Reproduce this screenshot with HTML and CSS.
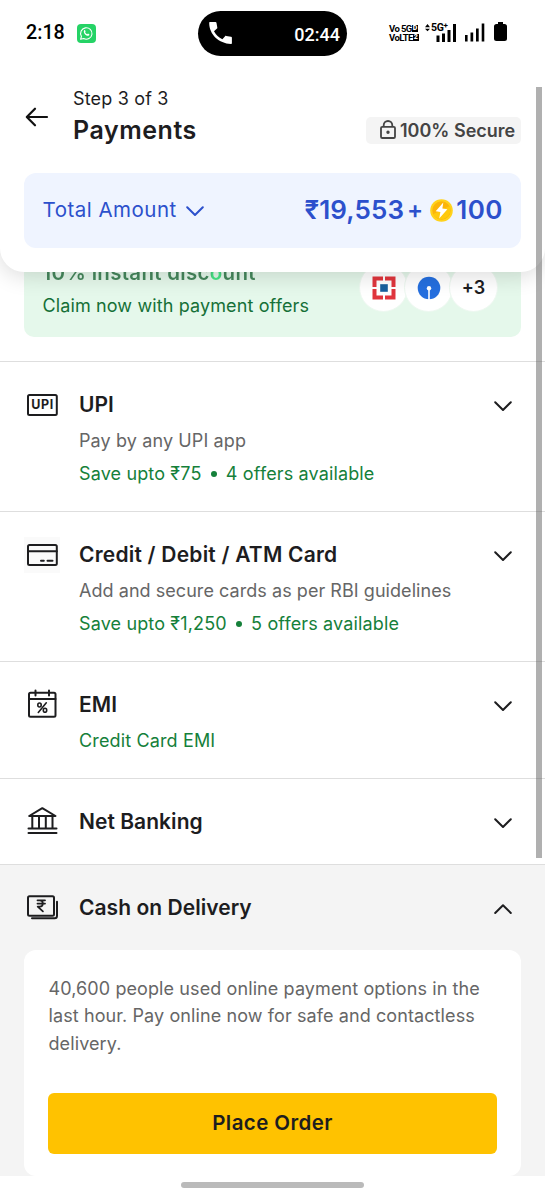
FILE: index.html
```html
<!DOCTYPE html>
<html lang="en">
<head>
<meta charset="utf-8">
<title>Payments</title>
<link rel="stylesheet" href="styles.css">
</head>
<body>
<div class="screen">
  <header class="top">
    <div class="status">
      <span class="clock">2:18</span>
      <svg class="wa" width="19" height="19" viewBox="0 0 19 19"><rect width="19" height="19" rx="4" fill="#25d366"/><path d="M3.600 15.300l.8-3A5.700 5.700 0 1 1 6.700 14.500z" fill="none" stroke="#fff" stroke-width="1.100" stroke-linejoin="round"/><path d="M7.200 6.300c.5-.4.9-.2 1 .2l.4 1-.5.8c.5 1 1.200 1.600 2.100 2l.8-.7 1.200.6c.4.3.1 1.100-.4 1.400-1 .6-2.600 0-3.700-1.100S6.300 7.300 7.200 6.300z" fill="#fff"/></svg>
      <div class="call">
        <svg width="24" height="24" viewBox="0 0 24 24"><path d="M1.200 1h5.300c.6 0 .9.3 1 .9l.8 4.500c.1.500 0 .8-.3 1.100L5 10.200a18 18 0 0 0 8.400 8l2.700-3c.3-.3.6-.4 1.100-.3l4.800.9c.6.100.9.500.9 1v5.100c0 .7-.4 1-1 1C10 22.600.3 13.500.2 2c0-.6.3-1 1-1z" fill="#fff"/></svg>
        <span>02:44</span>
      </div>
      <div class="vo"><div>Vo 5G<b>D</b></div><div>VoLTE<b>2</b></div></div>
      <div class="cell">
        <svg width="32" height="20" viewBox="0 0 32 20"><path d="M0 4.300L2.500 1 5 4.300zM0 5.700h5L2.500 8.300z"/><path d="M11.500 12.500h3V19h-3zM17 10.500h3V19h-3zM22.500 7h3v12h-3zM28 1h3v18h-3z"/></svg>
        <span class="fiveg">5G<sup>+</sup></span>
      </div>
      <svg class="bars" width="20" height="19" viewBox="0 0 20 19"><path d="M0 12h2.600v6.500H0zM5.500 9.500h2.700v9H5.500zM11 5.500h2.700v13H11zM16.700.5h2.600v18h-2.600z"/></svg>
      <svg class="batt" width="13" height="20" viewBox="0 0 13 20"><path d="M4 0h5v2h1.500A2.500 2.500 0 0 1 13 4.500v12a2.500 2.500 0 0 1-2.500 2.500h-8A2.500 2.500 0 0 1 0 16.500v-12A2.500 2.500 0 0 1 2.500 2H4z"/></svg>
    </div>
    <div class="nav">
      <svg class="back" width="24" height="20" viewBox="0 0 24 20"><path d="M22 10H2M10 1.700L1.800 10 10 18.300"/></svg>
      <div class="heading">
        <div class="step">Step 3 of 3</div>
        <h1>Payments</h1>
      </div>
      <div class="secure">
        <svg width="16" height="19" viewBox="0 0 16 19"><rect x="1" y="6.800" width="14" height="11.200" rx="1.300"/><path d="M3.700 6.500V5.300a4.300 4.300 0 0 1 8.600 0v1.200"/><circle cx="8" cy="12.300" r=".8"/></svg>
        <span>100% Secure</span>
      </div>
    </div>
    <div class="total">
      <span class="label">Total Amount</span>
      <svg class="chev" width="18" height="11" viewBox="0 0 18 11"><path d="M1.200 1.200L9 9l7.800-7.800"/></svg>
      <span class="sum">₹19,553</span><span class="plus">+</span>
      <svg class="coin" width="23" height="23" viewBox="0 0 23 23"><circle cx="11.500" cy="11.500" r="11.300" fill="#ffd21c"/><circle cx="11.500" cy="11.500" r="9.200" fill="#fbb40a"/><path d="M3 15.200A9.200 9.200 0 0 0 19.500 7z" fill="#ffc90d"/><path d="M13.300 3.500L5.700 12.300l4.700.7-1.200 6.500 8.200-9.300-5-.7z" fill="#fff"/></svg>
      <span class="points">100</span>
    </div>
  </header>

  <section class="offer">
    <div>
      <div class="offer-title">10% instant discount</div>
      <div class="offer-sub">Claim now with payment offers</div>
    </div>
    <div class="banks">
      <div class="bank"><svg width="24" height="24" viewBox="0 0 24 24"><path d="M.5.5h23v23H.5z" fill="#e0353d"/><path d="M4.500 4.500h15v15h-15zM11 0h2v24h-2zM0 11h24v2H0z" fill="#fff"/><path d="M8.200 8.200h7.600v7.600H8.200z" fill="#17609e"/></svg></div>
      <div class="bank"><svg width="24" height="24" viewBox="0 0 24 24"><circle cx="12" cy="12" r="11.300" fill="#256fdf"/><circle cx="12" cy="12.300" r="2.200" fill="#fff"/><path d="M11.200 13h1.600v11h-1.600z" fill="#fff"/></svg></div>
      <div class="bank">+3</div>
    </div>
  </section>

  <main>
    <section class="row">
      <svg class="icon" width="36" height="36" viewBox="0 0 36 36"><rect x="4" y="8" width="28.800" height="20" rx="1.500"/><text x="18.300" y="22.300" text-anchor="middle" textLength="22" class="upi">UPI</text></svg>
      <div class="body"><h2>UPI</h2><p>Pay by any UPI app</p><p class="save">Save upto ₹75 <i></i> 4 offers available</p></div>
      <svg class="chev" width="18" height="11" viewBox="0 0 18 11"><path d="M1.200 1.200L9 9l7.800-7.800"/></svg>
    </section>
    <section class="row">
      <svg class="icon tint" width="36" height="36" viewBox="0 0 36 36"><rect x="4" y="8" width="28.800" height="20" rx="1.500"/><path d="M4 14.300h28.800M17 23.700h2.800M23.500 23.700h5"/></svg>
      <div class="body"><h2 class="card">Credit / Debit / ATM Card</h2><p class="tight">Add and secure cards as per RBI guidelines</p><p class="save">Save upto ₹1,250 <i></i> 5 offers available</p></div>
      <svg class="chev" width="18" height="11" viewBox="0 0 18 11"><path d="M1.200 1.200L9 9l7.800-7.800"/></svg>
    </section>
    <section class="row">
      <svg class="icon" width="36" height="36" viewBox="0 0 36 36"><rect x="5" y="5.700" width="26.500" height="24" rx="1.500"/><path d="M5 12h26.500M11.500 3.500v5M25 3.500v5"/><g class="thin"><path d="M22.300 15.800L14.300 25.500"/><ellipse cx="15.500" cy="18" rx="1.700" ry="2"/><ellipse cx="21" cy="23.300" rx="1.700" ry="2"/></g></svg>
      <div class="body"><h2>EMI</h2><p class="save">Credit Card EMI</p></div>
      <svg class="chev" width="18" height="11" viewBox="0 0 18 11"><path d="M1.200 1.200L9 9l7.800-7.800"/></svg>
    </section>
    <section class="row net">
      <svg class="icon" width="36" height="36" viewBox="0 0 36 36"><path d="M4.500 24.500h28M4.500 29h28M5.200 12L18.300 4.200l13.200 7.800zM8.300 12v12.500M15 12v12.500M21.800 12v12.500M28.500 12v12.500"/></svg>
      <div class="body"><h2>Net Banking</h2></div>
      <svg class="chev" width="18" height="11" viewBox="0 0 18 11"><path d="M1.200 1.200L9 9l7.800-7.800"/></svg>
    </section>
    <section class="cod">
      <div class="row open">
        <svg class="icon" width="36" height="36" viewBox="0 0 36 36"><rect x="4" y="6.300" width="26" height="19.500" rx="1.500"/><path d="M33 11.800v14q0 2.500-2.300 2.500H8"/><path class="rupee" d="M13.500 10.300h7.500M13.500 13.600h7.500M13.500 10.300h2.300c4 0 4 6.300 0 6.300h-2.100l5.200 4.700"/></svg>
        <div class="body"><h2>Cash on Delivery</h2></div>
        <svg class="chev" width="18" height="11" viewBox="0 0 18 11"><path d="M1.200 9L9 1.200 16.800 9"/></svg>
      </div>
      <div class="panel">
        <p>40,600 people used online payment options in the<br>last hour. Pay online now for safe and contactless<br>delivery.</p>
        <button>Place Order</button>
      </div>
    </section>
  </main>
  <footer><div class="pill"></div></footer>
  <div class="scroll"></div>
</div>
</body>
</html>
```
FILE: styles.css
```css
* { box-sizing: border-box; }
body { margin: 0; font-family: Inter, "Noto Sans", sans-serif; color: #1d1d1f; }
h1, h2, p { margin: 0; }
svg { flex: none; display: block; }
.screen { position: relative; width: 545px; height: 1200px; overflow: hidden; background: #fff; display: flex; flex-direction: column; }

.top { position: relative; z-index: 2; flex: none; height: 272px; background: #fff; border-radius: 0 0 24px 24px; box-shadow: 0 4px 22px rgba(0,0,0,.14); }
.status { height: 66px; display: flex; align-items: center; padding-left: 26px; color: #000; font-family: Roboto, sans-serif; }
.clock { width: 51px; margin-top: -1px; font-size: 19.700px; font-weight: 500; white-space: nowrap; }
.call { width: 149px; height: 45px; margin-left: 102px; border-radius: 23px; background: #000; color: #fff; display: flex; align-items: center; justify-content: space-between; padding: 2px 7px 0 11px; font-size: 18px; font-weight: 500; }
.call svg { margin-top: -3px; }
.vo { width: 30px; margin-left: 42px; margin-top: -1px; font-size: 9.500px; line-height: 9px; font-weight: 700; letter-spacing: -.6px; white-space: nowrap; }
.vo div { display: flex; align-items: center; justify-content: space-between; width: 29px; white-space: pre; }
.vo b { font-size: 7px; background: #000; color: #fff; padding: 0 1px; line-height: 7px; letter-spacing: 0; }
.cell { position: relative; margin-left: 6px; width: 32px; }
.fiveg { position: absolute; left: 6px; top: -1px; font-size: 10.500px; line-height: 11px; font-weight: 700; letter-spacing: -.3px; white-space: nowrap; }
.fiveg sup { font-size: 8px; line-height: 1px; vertical-align: 3px; }
.bars { margin-left: 8px; margin-top: -1px; }
.batt { margin-left: 9px; margin-top: -2px; }

.nav { display: flex; height: 107px; padding: 0 24px 0 25px; }
.back { margin-top: 41px; fill: none; stroke: #111; stroke-width: 2.200; stroke-linecap: round; stroke-linejoin: round; }
.heading { margin-left: 24px; flex: 1; padding-top: 21px; }
.step { font-size: 18px; line-height: 24px; letter-spacing: .18px; }
h1 { font-size: 25px; line-height: 36px; font-weight: 600; margin-top: 1px; letter-spacing: .55px; }
.secure { width: 155px; height: 27px; margin-top: 51px; border-radius: 5px; background: #f4f4f4; display: flex; align-items: center; padding-left: 14px; gap: 4px; font-size: 18px; font-weight: 600; color: #444; white-space: nowrap; }
.secure svg { fill: none; stroke: #444; stroke-width: 1.800; margin-top: -3px; }

.total { margin: 0 24px; height: 75px; border-radius: 12px; background: #eff4ff; color: #2c50cc; display: flex; align-items: center; padding: 0 18px 2px 18.500px; }
.label { font-size: 20.500px; letter-spacing: .5px; }
.chev { fill: none; stroke: #1d1d1f; stroke-width: 2; stroke-linecap: round; stroke-linejoin: round; }
.total .chev { stroke: #2c50cc; margin-left: 9px; margin-top: 3px; }
.sum { margin-left: auto; font-size: 26px; font-weight: 600; letter-spacing: .1px; }
.plus { font-size: 24px; font-weight: 600; margin-left: 3px; }
.coin { margin-left: 7px; margin-top: 1px; }
.points { font-size: 26px; font-weight: 600; margin-left: 3px; letter-spacing: .5px; }

.offer { flex: none; height: 90px; margin: -25px 24px 24px; border-radius: 0 0 10px 10px; background: #e5f8eb; display: flex; justify-content: space-between; padding: 11px 23px 0 18.500px; }
.offer-title { width: fit-content; font-size: 20.500px; line-height: 30px; font-weight: 600; letter-spacing: .3px; white-space: nowrap; color: transparent; background: linear-gradient(90deg, #45875c 77%, #46e586 79.500%, #46e586 83%, #45875c 85%); background-clip: text; -webkit-background-clip: text; }
.offer-sub { font-size: 18px; line-height: 24px; margin-top: 6px; color: #157037; white-space: nowrap; letter-spacing: .12px; }
.banks { display: flex; margin-top: 5px; }
.bank { width: 49px; height: 49px; margin-right: -4px; border-radius: 50%; background: #fff; border: 1px solid #edf8f0; display: flex; align-items: center; justify-content: center; color: #1d1d1f; font-size: 18px; font-weight: 600; }
.bank:last-child { margin-right: 0; }

.row { display: flex; border-top: 1.500px solid #dedede; padding: 27px 33px 22px 24px; height: 150px; }
.row:nth-child(3) { height: 117px; }
.row.net { height: 86px; }
.row > .chev { margin-top: 11.500px; }
.icon { margin-top: -2px; fill: none; stroke: #1d1d1f; stroke-width: 2; stroke-linecap: round; stroke-linejoin: round; }
.tint { background: #fafafa; }
.upi { fill: #1d1d1f; stroke: none; font: 700 12.500px Inter, sans-serif; }
.thin { stroke-width: 1.600; }
.rupee { stroke-width: 1.800; }
.body { flex: 1; margin-left: 19px; white-space: nowrap; }
h2 { font-size: 21px; line-height: 32px; font-weight: 600; letter-spacing: .04px; }
.card { letter-spacing: .22px; }
.body p { font-size: 18px; line-height: 33px; margin-top: 3px; color: #666; letter-spacing: .12px; }
.body .tight { letter-spacing: .05px; }
.body .save { color: #15803a; letter-spacing: .14px; }
.body p + .save { margin-top: 0; }
.save i { display: inline-block; width: 6px; height: 6px; margin: 0 4px; border-radius: 50%; background: #15803a; vertical-align: 3px; }

.cod { height: 312px; background: #f4f4f4; }
.row.open { height: 86px; }
.panel { margin: 0 24px; height: 226px; padding: 25px 24px 0; background: #fff; border-radius: 12px; }
.panel p { font-size: 18px; line-height: 27.300px; color: #666; white-space: nowrap; letter-spacing: .1px; padding-left: .5px; }
button { display: block; width: 449px; height: 61px; margin-top: 36px; padding: 0 0 2px; border: 0; border-radius: 6px; background: #ffc200; color: #1d1d1f; font: 600 20.500px Inter, sans-serif; letter-spacing: .4px; }
footer { flex: 1; display: flex; justify-content: center; padding-top: 6px; background: #fff; }
.pill { width: 183px; height: 6px; border-radius: 3px; background: #bababa; }
.scroll { position: absolute; z-index: 3; left: 536px; top: 87px; width: 6px; height: 771px; background: rgba(80,80,80,.45); }
```
